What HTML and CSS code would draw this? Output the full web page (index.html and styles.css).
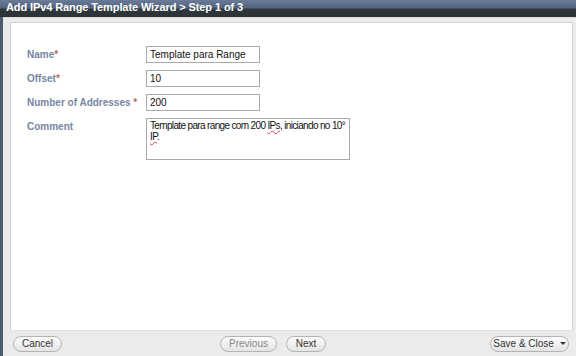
FILE: index.html
```html
<!DOCTYPE html>
<html>
<head>
<meta charset="utf-8">
<link rel="stylesheet" href="styles.css">
</head>
<body>
<div class="win">
  <div class="titlebar">Add IPv4 Range Template Wizard &gt; Step 1 of 3</div>
  <div class="frame">
    <div class="panel">
      <div class="form">
        <div class="row">
          <label class="lbl">Name<span class="req">*</span></label>
          <div class="input">Template para Range</div>
        </div>
        <div class="row">
          <label class="lbl">Offset<span class="req">*</span></label>
          <div class="input">10</div>
        </div>
        <div class="row">
          <label class="lbl">Number of Addresses <span class="req">*</span></label>
          <div class="input">200</div>
        </div>
        <div class="row">
          <label class="lbl">Comment</label>
          <div class="textarea">Template para range com 200 <span class="sp">IPs</span>, iniciando no 10°<br><span class="sp">IP</span>.</div>
        </div>
      </div>
    </div>
    <div class="footer">
      <button class="btn cancel">Cancel</button>
      <div class="mid">
        <button class="btn prev">Previous</button>
        <button class="btn next">Next</button>
      </div>
      <button class="btn save">Save &amp; Close <span class="caret"></span></button>
    </div>
  </div>
</div>
</body>
</html>
```

FILE: styles.css
```css
html, body { margin: 0; padding: 0; }
body {
  width: 576px; height: 356px; overflow: hidden;
  font-family: "Liberation Sans", Arial, sans-serif;
  background: #4d5c6a;
}
.win { display: flex; flex-direction: column; height: 356px; }
.titlebar {
  height: 17px;
  background: linear-gradient(#6a7b99 0%, #54647f 45%, #30383c 55%, #2c3336 100%);
  color: #fff;
  font-weight: bold;
  font-size: 11px;
  line-height: 15px;
  padding-left: 6px;
  letter-spacing: -0.1px;
}
.frame {
  flex: 1;
  margin-left: 3px;
  background: #ebebeb;
  display: flex; flex-direction: column;
  border-top: 1px solid #dcdcdc;
}
.panel {
  flex: 1;
  margin: 4px 3px 0 7px;
  background: #fff;
  border: 1px solid #d4d4d4;
  border-bottom-color: #e2e2e2;
}
.form { padding: 23px 0 0 16px; display: flex; flex-direction: column; gap: 7px; }
.row { display: flex; align-items: flex-start; }
.lbl {
  width: 119px;
  font-weight: bold; font-size: 10px; color: #7686a2;
  padding-top: 3px;
}
.req { color: #b86868; }
.input, .textarea {
  border: 1px solid #a9a9a9;
  font-size: 10px; color: #111;
  padding-left: 3px;
  box-sizing: border-box;
}
.input { width: 114px; height: 17px; line-height: 15px; }
.textarea {
  width: 204px; height: 42px; line-height: 11px; padding-top: 1px;
  white-space: nowrap; letter-spacing: -0.65px;
}
.sp { text-decoration: underline wavy #e04040; text-decoration-thickness: 1px; }
.footer {
  height: 25px;
  display: flex; align-items: center;
  padding: 0 7px 0 10px;
}
.mid { flex: 1; display: flex; justify-content: center; gap: 9px; padding-right: 6px; }
.btn {
  height: 16px;
  border: 1px solid #b4b4b4;
  border-radius: 8px;
  background: linear-gradient(#fcfcfc, #e4e4e4);
  font-family: "Liberation Sans", Arial, sans-serif;
  font-size: 10px; color: #333;
  padding: 0;
  line-height: 14px;
}
.cancel { width: 49px; }
.prev { width: 57px; color: #888; }
.next { width: 40px; }
.save { width: 79px; }
.caret {
  display: inline-block; width: 0; height: 0;
  border-left: 3px solid transparent; border-right: 3px solid transparent;
  border-top: 3px solid #333; vertical-align: middle; margin-left: 3px;
}
```
